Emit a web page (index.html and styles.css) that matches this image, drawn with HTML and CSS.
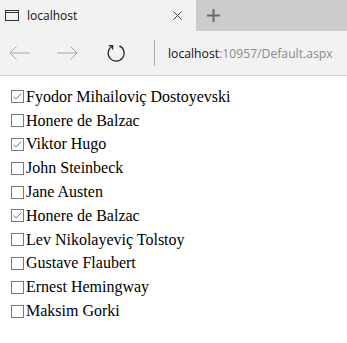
FILE: index.html
```html
<!DOCTYPE html>
<html lang="en">
<head>
    <meta charset="UTF-8">
    <title>localhost</title>
<link rel="stylesheet" href="styles.css">
</head>
<body>
<div class="tabbar">
    <div class="tab">
        <svg class="tab-icon" width="14" height="11" viewBox="0 0 14 11">
            <rect x="0.5" y="0.5" width="13" height="10" fill="none" stroke="#333"/>
            <line x1="0" y1="2.5" x2="14" y2="2.5" stroke="#333" stroke-width="1"/>
        </svg>
        <span class="tab-title">localhost</span>
        <svg class="tab-close" width="9" height="9" viewBox="0 0 9 9">
            <path d="M0.5 0.5 L8.5 8.5 M8.5 0.5 L0.5 8.5" stroke="#444" stroke-width="1"/>
        </svg>
    </div>
    <div class="newtab">
        <svg width="13" height="13" viewBox="0 0 13 13">
            <path d="M6.5 0 V13 M0 6.5 H13" stroke="#6b6b6b" stroke-width="2"/>
        </svg>
    </div>
</div>

<div class="toolbar">
    <!-- nav buttons -->
    <svg class="navbtn" width="22" height="14" viewBox="0 0 22 14">
        <path d="M1 7 H21 M7.5 0.5 L1 7 L7.5 13.5" fill="none" stroke="#a6a6a6" stroke-width="1"/>
    </svg>
    <svg class="navbtn" width="22" height="14" viewBox="0 0 22 14">
        <path d="M1 7 H21 M14.5 0.5 L21 7 L14.5 13.5" fill="none" stroke="#a6a6a6" stroke-width="1"/>
    </svg>
    <svg class="navbtn refresh" width="20" height="20" viewBox="0 0 20 20">
        <path d="M6.2 3.2 A8 8 0 1 0 13.5 2.9" fill="none" stroke="#222" stroke-width="1.2"/>
        <path d="M2.8 2.6 H6.6 V6.4" fill="none" stroke="#222" stroke-width="1.2"/>
    </svg>
    <div class="sep"></div>
    <div class="url"><span class="host">localhost</span>:10957/Default.aspx</div>
</div>

<div class="page">
    <div class="authors">
        <label class="item"><span class="box checked"><svg width="11" height="11" viewBox="0 0 11 11"><path d="M1.5 5.5 L4 8 L9.5 2.5" fill="none" stroke="#777" stroke-width="1"/></svg></span>Fyodor Mihailoviç Dostoyevski</label>
        <label class="item"><span class="box"></span>Honere de Balzac</label>
        <label class="item"><span class="box checked"><svg width="11" height="11" viewBox="0 0 11 11"><path d="M1.5 5.5 L4 8 L9.5 2.5" fill="none" stroke="#777" stroke-width="1"/></svg></span>Viktor Hugo</label>
        <label class="item"><span class="box"></span>John Steinbeck</label>
        <label class="item"><span class="box"></span>Jane Austen</label>
        <label class="item"><span class="box checked"><svg width="11" height="11" viewBox="0 0 11 11"><path d="M1.5 5.5 L4 8 L9.5 2.5" fill="none" stroke="#777" stroke-width="1"/></svg></span>Honere de Balzac</label>
        <label class="item"><span class="box"></span>Lev Nikolayeviç Tolstoy</label>
        <label class="item"><span class="box"></span>Gustave Flaubert</label>
        <label class="item"><span class="box"></span>Ernest Hemingway</label>
        <label class="item"><span class="box"></span>Maksim Gorki</label>
    </div>
</div>
</body>
</html>
```

FILE: styles.css
```css
body {
  margin: 0;
  background: #fff;
  font-family: "Liberation Serif", serif;
}

/*Tab strip*/
.tabbar {
  display: flex;
  height: 31px;
  background: #cccccc;
}
.tab {
  display: flex;
  align-items: center;
  width: 196px;
  background: #f2f2f2;
  box-sizing: border-box;
  padding-left: 5px;
}
.tab-icon {
  margin-right: 8px;
}
.tab-title {
  font-family: "Open Sans", sans-serif;
  font-size: 12px;
  color: #111;
  flex: 1;
}
.tab-close {
  margin-right: 14px;
}
.newtab {
  display: flex;
  align-items: center;
  padding-left: 11px;
}

/*Address bar*/
.toolbar {
  display: flex;
  align-items: center;
  height: 44px;
  background: #f2f2f2;
  border-bottom: 1px solid #d4d4d4;
}
.navbtn {
  margin-left: 9px;
}
.navbtn + .navbtn {
  margin-left: 25px;
}
.navbtn.refresh {
  margin-left: 28px;
}
.sep {
  width: 1px;
  height: 26px;
  background: #a8a8a8;
  margin-left: 28px;
}
.url {
  margin-left: 13px;
  font-family: "Open Sans", sans-serif;
  font-size: 12.2px;
  color: #8a8a8a;
}
.url .host {
  color: #111;
}

/*Checkbox list*/
.page {
  padding: 9px 0 0 11px;
}
.item {
  display: flex;
  align-items: center;
  height: 23.8px;
  font-size: 16px;
  color: #000;
}
.box {
  display: flex;
  align-items: center;
  justify-content: center;
  width: 13px;
  height: 13px;
  box-sizing: border-box;
  border: 1px solid #7a7a7a;
  background: #fff;
  margin-right: 2px;
}
```
